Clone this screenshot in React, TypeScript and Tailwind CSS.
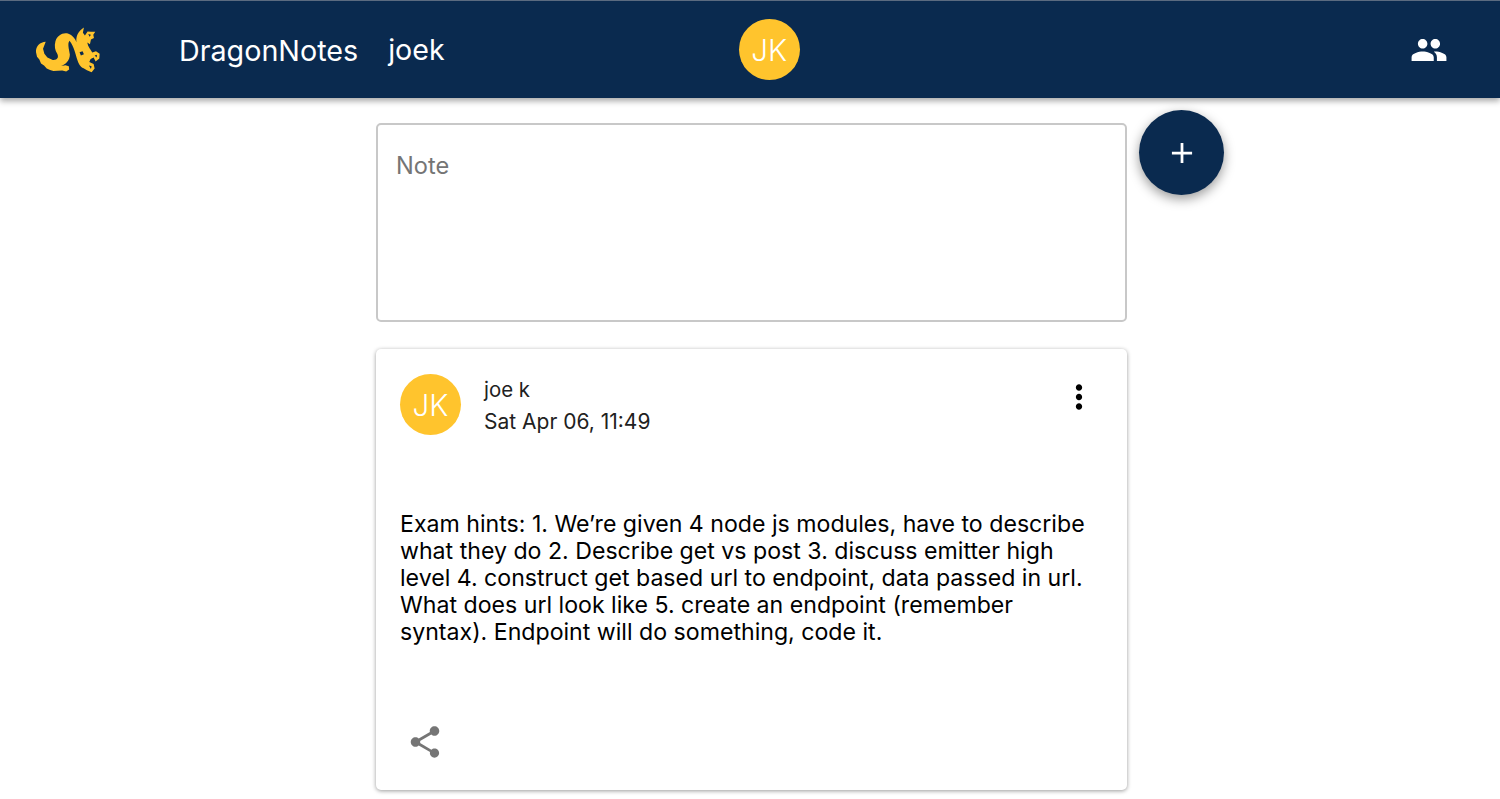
function Dragon() {
    return (
        <svg viewBox="105 80 200 140" className="w-[67px] h-[47px]">
            <path
                fill="#ffc42d"
                d="M137 127 L129 148 L133 163 L142 174 L158 181 C172 182 177 174 171 162 C165 152 162 140 166 125 C172 108 188 98 205 103 C216 107 224 116 229 128 C226 112 234 94 251 84 L248 100 L254 108 L262 96 L272 97 L285 97 L279 106 L281 116 L272 120 L269 134 L261 129 C263 142 271 150 276 159 L287 155 L298 163 L297 177 L286 186 L280 174 L271 178 L267 187 L280 193 L283 207 L274 218 L260 212 L250 206 C240 203 235 192 231 180 C226 165 222 142 208 124 C201 132 207 150 209 165 C209 182 197 195 183 199 L196 197 L206 200 L207 210 L198 216 L186 213 L160 214 L150 211 L140 207 L132 198 L123 192 L118 180 L111 172 L108 158 C107 140 120 128 137 127 Z"
            />
            <path fill="#0a2a4f" d="M238 158 L247 155 L251 164 L242 168 Z M264 104 L272 106 L268 112 Z M283 168 L290 166 L289 174 Z M266 198 L274 200 L272 208 Z" />
        </svg>
    );
}

function App() {
    return (
        <div className="min-h-[799px] bg-white font-['Inter','Liberation_Sans',sans-serif] overflow-hidden">
            <header className="h-[98px] border-t border-[#5b6b80] bg-[#0a2a4f] shadow-[0_3px_6px_rgba(0,0,0,0.35)] flex items-center text-white">
                <div className="ml-[35px] w-[144px]">
                    <Dragon />
                </div>
                <span className="text-[28.7px] pt-[2px]">DragonNotes</span>
                <span className="text-[28.6px] ml-[30px] pt-[2px]">joek</span>
                <div className="ml-[294px] w-[61px] h-[61px] rounded-full bg-[#ffc42d] flex items-center justify-center text-[29.5px] font-light pt-[2px]">
                    JK
                </div>
                <svg viewBox="0 0 24 24" className="ml-auto mr-[52px] w-[38px] h-[38px] fill-white">
                    <path d="M16 11c1.66 0 2.99-1.34 2.99-3S17.66 5 16 5c-1.66 0-3 1.34-3 3s1.34 3 3 3zm-8 0c1.66 0 2.99-1.34 2.99-3S9.66 5 8 5C6.34 5 5 6.34 5 8s1.34 3 3 3zm0 2c-2.33 0-7 1.17-7 3.5V19h14v-2.5c0-2.33-4.67-3.5-7-3.5zm8 0c-.29 0-.62.02-.97.05 1.16.84 1.97 1.97 1.97 3.45V19h6v-2.5c0-2.33-4.67-3.5-7-3.5z" />
                </svg>
            </header>

            <main className="pl-[376px]">
                <div className="flex items-start gap-3 pt-3">
                    <div className="mt-[13px] w-[751px] h-[199px] border-2 border-[#c8c8c8] rounded-[5px] px-[18px] py-[27px] text-[23.6px] leading-7 text-[#757575]">
                        Note
                    </div>
                    <button className="w-[85px] h-[85px] rounded-full bg-[#0a2a4f] flex items-center justify-center shadow-[0_4px_12px_rgba(0,0,0,0.4)]">
                        <svg viewBox="0 0 24 24" className="w-[22px] h-[22px] stroke-white stroke-[3] fill-none">
                            <path d="M12 1v22M1 12h22" />
                        </svg>
                    </button>
                </div>

                <section className="mt-[27px] w-[751px] h-[441px] rounded-[5px] bg-white shadow-[0_1px_4px_rgba(0,0,0,0.4)] pt-[25px] px-6 flex flex-col">
                    <div className="flex items-start">
                        <div className="w-[61px] h-[61px] rounded-full bg-[#ffc42d] text-white flex items-center justify-center text-[29.5px] font-light pt-[2px]">
                            JK
                        </div>
                        <div className="ml-[23px] text-[#212121]">
                            <div className="text-[20.4px] leading-[30px] pt-[1px]">joe k</div>
                            <div className="text-[21px] leading-[32px] mt-[1px]">Sat Apr 06, 11:49</div>
                        </div>
                        <svg viewBox="0 0 24 24" className="ml-auto mr-[5px] mt-[4px] w-[38px] h-[38px] fill-black">
                            <path d="M12 8c1.1 0 2-.9 2-2s-.9-2-2-2-2 .9-2 2 .9 2 2 2zm0 2c-1.1 0-2 .9-2 2s.9 2 2 2 2-.9 2-2-.9-2-2-2zm0 6c-1.1 0-2 .9-2 2s.9 2 2 2 2-.9 2-2-.9-2-2-2z" />
                        </svg>
                    </div>
                    <p className="mt-[73px] text-[23.14px] leading-[27px] text-black">
                        Exam hints: 1. We’re given 4 node js modules, have to describe what they do 2. Describe get vs post 3. discuss emitter high level 4. construct get based url to endpoint, data passed in url. What does url look like 5. create an endpoint (remember syntax). Endpoint will do something, code it.
                    </p>
                    <svg viewBox="0 0 24 24" className="mt-[77px] ml-[6px] w-[38px] h-[38px] fill-[#757575]">
                        <path d="M18 16.08c-.76 0-1.44.3-1.96.77L8.91 12.7c.05-.23.09-.46.09-.7s-.04-.47-.09-.7l7.05-4.11c.54.5 1.25.81 2.04.81 1.66 0 3-1.34 3-3s-1.34-3-3-3-3 1.34-3 3c0 .24.04.47.09.7L8.04 9.81C7.5 9.31 6.79 9 6 9c-1.66 0-3 1.34-3 3s1.34 3 3 3c.79 0 1.5-.31 2.04-.81l7.12 4.16c-.05.21-.08.43-.08.65 0 1.61 1.31 2.92 2.92 2.92 1.61 0 2.92-1.31 2.92-2.92s-1.31-2.92-2.92-2.92z" />
                    </svg>
                </section>
            </main>
        </div>
    );
}

export default App;
